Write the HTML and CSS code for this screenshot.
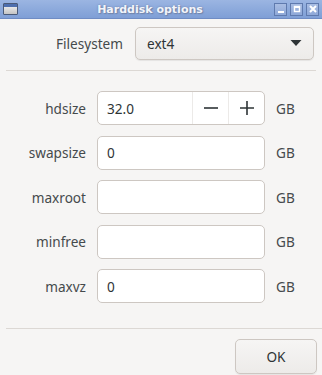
FILE: index.html
```html
<!DOCTYPE html>
<html lang="en">

<head>
    <meta charset="UTF-8">
    <meta name="viewport" content="width=device-width, initial-scale=1.0">
    <title>Harddisk options</title>
    <link rel="stylesheet" href="styles.css">
</head>

<body>
    <div class="window">
        <!-- Title bar -->
        <div class="titlebar">
            <span class="app-icon"></span>
            <span class="title">Harddisk options</span>
            <div class="wm-buttons">
                <span class="wm-btn"><svg width="8" height="8" viewBox="0 0 8 8"><rect x="1" y="6" width="6" height="2" fill="#fff"/></svg></span>
                <span class="wm-btn"><svg width="8" height="8" viewBox="0 0 8 8"><rect x="1.5" y="1.5" width="5" height="5" fill="none" stroke="#fff" stroke-width="1.4"/><rect x="1" y="1" width="6" height="2" fill="#fff"/></svg></span>
                <span class="wm-btn"><svg width="8" height="8" viewBox="0 0 8 8"><path d="M1 1 L7 7 M7 1 L1 7" stroke="#fff" stroke-width="2"/></svg></span>
            </div>
        </div>

        <div class="content">
            <div class="fs-row">
                <label class="label">Filesystem</label>
                <div class="combo">
                    <span>ext4</span>
                    <svg width="12" height="8" viewBox="0 0 12 8"><path d="M0.5 1 L11.5 1 L6 7 Z" fill="#2e3436"/></svg>
                </div>
            </div>

            <hr class="sep">

            <div class="form">
                <label class="label">hdsize</label>
                <div class="entry spin">
                    <span class="value">32.0</span>
                    <span class="spin-btn"><svg width="16" height="16" viewBox="0 0 16 16"><path d="M1 8 H15" stroke="#2e3436" stroke-width="1.6"/></svg></span>
                    <span class="spin-btn"><svg width="16" height="16" viewBox="0 0 16 16"><path d="M1 8 H15 M8 1 V15" stroke="#2e3436" stroke-width="1.6"/></svg></span>
                </div>
                <span class="unit">GB</span>

                <label class="label">swapsize</label>
                <div class="entry"><span class="value">0</span></div>
                <span class="unit">GB</span>

                <label class="label">maxroot</label>
                <div class="entry"></div>
                <span class="unit">GB</span>

                <label class="label">minfree</label>
                <div class="entry"></div>
                <span class="unit">GB</span>

                <label class="label">maxvz</label>
                <div class="entry"><span class="value">0</span></div>
                <span class="unit">GB</span>
            </div>

            <hr class="sep sep-bottom">

            <div class="actions">
                <button class="ok">OK</button>
            </div>
        </div>
    </div>
</body>

</html>
```

FILE: styles.css
```css
body {
    margin: 0;
    padding: 0;
    font-family: 'Noto Sans', 'DejaVu Sans', sans-serif;
    font-size: 13.6px;
    color: #2e3436;
    background: #f6f5f4;
    overflow: hidden;
}

.window {
    width: 322px;
    height: 375px;
    background: #f6f5f4;
}

/* Title bar */
.titlebar {
    height: 18px;
    display: flex;
    align-items: center;
    background: linear-gradient(#9bb5e2, #7f9fd6);
    border-bottom: 1px solid #6f8cc4;
    position: relative;
}

.app-icon {
    width: 13px;
    height: 10px;
    margin-left: 3px;
    border: 1px solid #4a5a78;
    border-radius: 1px;
    background: linear-gradient(#4e6fae 0 3px, #e8e8e8 3px, #c4c4c4);
}

.title {
    flex: 1;
    text-align: center;
    font-family: 'DejaVu Sans', sans-serif;
    font-weight: bold;
    font-size: 11px;
    color: #f2f4fa;
    text-shadow: 0 0 2px #6b7fa6, 1px 1px 1px #7486ab;
    padding-left: 8px;
}

.wm-buttons {
    display: flex;
    gap: 3px;
    margin-right: 3px;
}

.wm-btn {
    width: 11px;
    height: 11px;
    border: 1px solid #5f7aae;
    background: linear-gradient(#a9bde3, #8ea8d8);
    display: flex;
    align-items: center;
    justify-content: center;
}

/* Content */
.content {
    padding: 7px 6px 0 6px;
}

.label,
.unit {
    color: #454a4c;
}

.fs-row {
    display: flex;
    align-items: center;
    height: 34px;
}

.fs-row .label {
    width: 129px;
    text-align: right;
    padding-right: 12px;
    box-sizing: border-box;
}

.combo {
    width: 179px;
    height: 33px;
    box-sizing: border-box;
    border: 1px solid #cdc7c2;
    border-radius: 5px;
    background: linear-gradient(#f6f5f4, #edebe9);
    box-shadow: 0 1px 1px rgba(0, 0, 0, 0.07);
    display: flex;
    align-items: center;
    justify-content: space-between;
    padding: 0 11px 0 11px;
}

.sep {
    border: none;
    border-top: 1px solid #dcd8d4;
    margin: 10px 0 0 0;
    height: 0;
}

.form {
    display: grid;
    grid-template-columns: 80px 168px auto;
    column-gap: 11px;
    row-gap: 10.5px;
    align-items: center;
    margin-top: 20px;
}

.form .label {
    text-align: right;
}

.entry {
    height: 34px;
    box-sizing: border-box;
    border: 1px solid #cdc7c2;
    border-radius: 5px;
    background: #fff;
    display: flex;
    align-items: center;
}

.value {
    padding-left: 9px;
    flex: 1;
}

.spin-btn {
    width: 35px;
    height: 100%;
    border-left: 1px solid #eceae8;
    display: flex;
    align-items: center;
    justify-content: center;
}

.sep-bottom {
    margin: 25px -6px 0 0;
}

.actions {
    display: flex;
    justify-content: flex-end;
    padding-top: 10px;
    margin-right: -1px;
}

.ok {
    width: 82px;
    height: 35px;
    font-family: inherit;
    font-size: 13.6px;
    color: #2e3436;
    border: 1px solid #cdc7c2;
    border-radius: 5px;
    background: linear-gradient(#f6f5f4, #edebe9);
    box-shadow: 0 1px 1px rgba(0, 0, 0, 0.07);
}
```
